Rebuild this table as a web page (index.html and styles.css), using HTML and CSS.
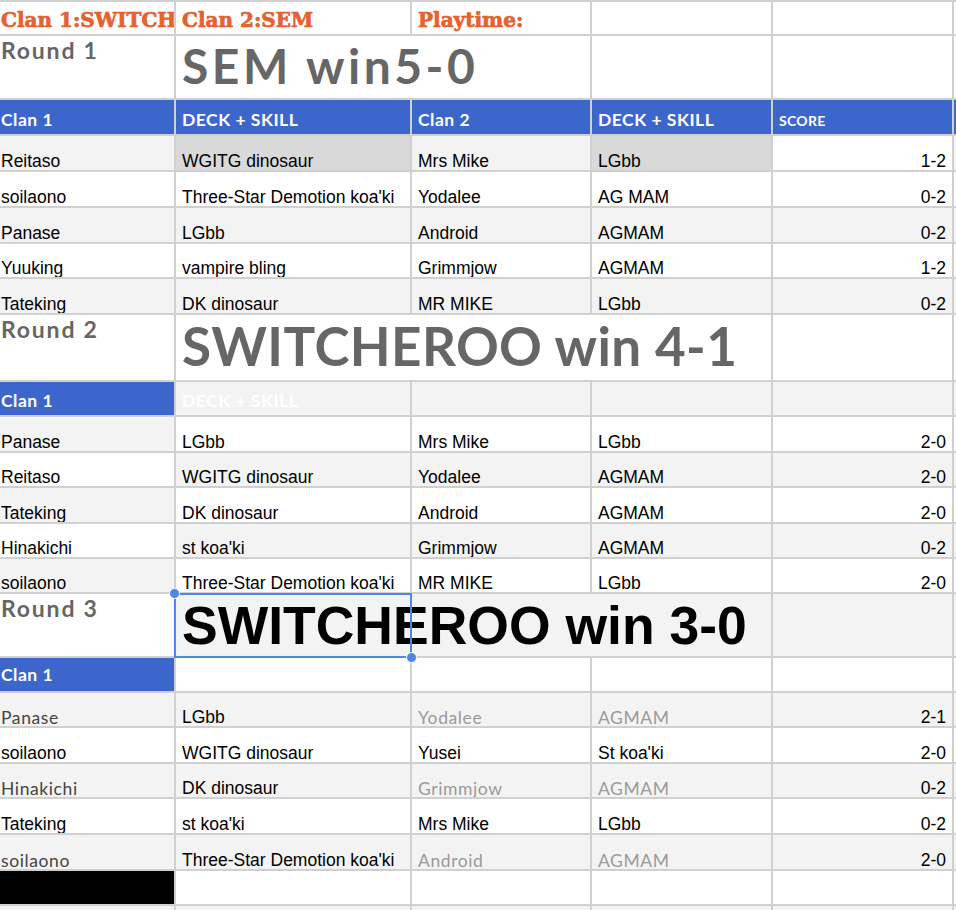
FILE: index.html
```html
<!DOCTYPE html>
<html lang="en">
<head>
<meta charset="utf-8">
<title>Clan match</title>
<link rel="stylesheet" href="styles.css">
</head>
<body>
<div class="sheet">
  <!-- title row -->
  <div class="c k1 t">Clan 1:SWITCH</div>
  <div class="c t">Clan 2:SEM</div>
  <div class="c t">Playtime:</div>
  <div class="c"></div><div class="c"></div><div class="c"></div>

  <!-- Round 1 -->
  <div class="c k1 rnd">Round 1</div>
  <div class="c big s2">SEM win5-0</div>
  <div class="c"></div><div class="c"></div><div class="c"></div>

  <div class="c k1 b hd">Clan 1</div>
  <div class="c b hd">DECK + SKILL</div>
  <div class="c b hd">Clan 2</div>
  <div class="c b hd">DECK + SKILL</div>
  <div class="c b hd sm">SCORE</div>
  <div class="c b"></div>

  <div class="c k1 g">Reitaso</div><div class="c d">WGITG dinosaur</div><div class="c g">Mrs Mike</div><div class="c d">LGbb</div><div class="c n">1-2</div><div class="c g"></div>
  <div class="c k1">soilaono</div><div class="c">Three-Star Demotion koa'ki</div><div class="c">Yodalee</div><div class="c">AG MAM</div><div class="c n">0-2</div><div class="c"></div>
  <div class="c k1 g">Panase</div><div class="c g">LGbb</div><div class="c g">Android</div><div class="c g">AGMAM</div><div class="c g n">0-2</div><div class="c g"></div>
  <div class="c k1">Yuuking</div><div class="c">vampire bling</div><div class="c">Grimmjow</div><div class="c">AGMAM</div><div class="c n">1-2</div><div class="c"></div>
  <div class="c k1 g">Tateking</div><div class="c g">DK dinosaur</div><div class="c g">MR MIKE</div><div class="c g">LGbb</div><div class="c g n">0-2</div><div class="c g"></div>

  <!-- Round 2 -->
  <div class="c k1 rnd">Round 2</div>
  <div class="c big s3">SWITCHEROO win 4-1</div>
  <div class="c"></div><div class="c"></div>

  <div class="c k1 b hd">Clan 1</div>
  <div class="c g hd">DECK + SKILL</div>
  <div class="c g"></div><div class="c g"></div><div class="c g"></div><div class="c g"></div>

  <div class="c k1 g">Panase</div><div class="c">LGbb</div><div class="c">Mrs Mike</div><div class="c">LGbb</div><div class="c n">2-0</div><div class="c"></div>
  <div class="c k1">Reitaso</div><div class="c g">WGITG dinosaur</div><div class="c g">Yodalee</div><div class="c g">AGMAM</div><div class="c g n">2-0</div><div class="c g"></div>
  <div class="c k1 g">Tateking</div><div class="c">DK dinosaur</div><div class="c">Android</div><div class="c">AGMAM</div><div class="c n">2-0</div><div class="c"></div>
  <div class="c k1">Hinakichi</div><div class="c g">st koa'ki</div><div class="c g">Grimmjow</div><div class="c g">AGMAM</div><div class="c g n">0-2</div><div class="c g"></div>
  <div class="c k1 g">soilaono</div><div class="c">Three-Star Demotion koa'ki</div><div class="c">MR MIKE</div><div class="c">LGbb</div><div class="c n">2-0</div><div class="c"></div>

  <!-- Round 3 -->
  <div class="c k1 rnd">Round 3</div>
  <div class="c g big3">SWITCHEROO win 3-0<div class="sel"></div></div>
  <div class="c g"></div><div class="c g"></div>

  <div class="c k1 b hd hd3">Clan 1</div>
  <div class="c"></div><div class="c"></div><div class="c"></div><div class="c"></div><div class="c"></div>

  <div class="c k1 g rl">Panase</div><div class="c g">LGbb</div><div class="c g rl lt">Yodalee</div><div class="c g rl lt">AGMAM</div><div class="c g n">2-1</div><div class="c g"></div>
  <div class="c k1">soilaono</div><div class="c">WGITG dinosaur</div><div class="c">Yusei</div><div class="c">St koa'ki</div><div class="c n">2-0</div><div class="c"></div>
  <div class="c k1 g rl">Hinakichi</div><div class="c g">DK dinosaur</div><div class="c g rl lt">Grimmjow</div><div class="c g rl lt">AGMAM</div><div class="c g n">0-2</div><div class="c g"></div>
  <div class="c k1">Tateking</div><div class="c">st koa'ki</div><div class="c">Mrs Mike</div><div class="c">LGbb</div><div class="c n">0-2</div><div class="c"></div>
  <div class="c k1 g rl">soilaono</div><div class="c g">Three-Star Demotion koa'ki</div><div class="c g rl lt">Android</div><div class="c g rl lt">AGMAM</div><div class="c g n">2-0</div><div class="c g"></div>

  <div class="c k1 blk"></div><div class="c"></div><div class="c"></div><div class="c"></div><div class="c"></div><div class="c"></div>
  <div class="c k1 g"></div><div class="c g"></div><div class="c g"></div><div class="c g"></div><div class="c g"></div><div class="c g"></div>
</div>
</body>
</html>
```

FILE: styles.css
```css
html, body {
  margin: 0;
  padding: 0;
  background: #fff;
  overflow: hidden;
}

.sheet {
  display: grid;
  grid-template-columns: 174px 234px 178px 179px 179px 1fr;
  grid-template-rows:
    32px 62px 34px 34px 34px 34px 33px 34px
    65px 33px 34px 33px 34px 33px 33px
    62px 33px 33px 34px 33px 34px 34px 33px 20px;
  gap: 2px;
  padding-top: 2px;
  background: #d0d0d0;
}

.c {
  background: #fff;
  display: flex;
  align-items: flex-end;
  min-width: 0;
  padding: 0 6px 0;
  overflow: hidden;
  white-space: nowrap;
  font: 17.5px/1 "Liberation Sans", Arial, sans-serif;
  color: #000;
}

.k1 { padding-left: 1px; }
.g { background: #f3f3f3; }
.d { background: #d9d9d9; }
.b { background: #3d66cc; }
.blk { background: #000; }
.n { justify-content: flex-end; }

.t {
  font: bold 20px/1 "DejaVu Serif", "Liberation Serif", serif;
  color: #e5622f;
  padding-bottom: 4px;
  -webkit-text-stroke: 0.7px #e5622f;
}

.rnd {
  align-items: flex-start;
  font: 700 23px/1.2 Lato, "Open Sans", sans-serif;
  color: #666;
  letter-spacing: 1.8px;
  padding-top: 1px;
}

.big {
  font: 700 48px/1 Lato, "Open Sans", sans-serif;
  color: #666;
  padding-bottom: 8px;
  letter-spacing: 3.5px;
}
.s2 { grid-column: span 2; }
.s3 { grid-column: span 3; font-size: 53px; padding-bottom: 8px; letter-spacing: 0.4px; }

.big3 {
  grid-column: span 3;
  position: relative;
  overflow: visible;
  font: 700 53.5px/1 "Liberation Sans", Arial, sans-serif;
  color: #000;
  padding-bottom: 4px;
}

.sel {
  position: absolute;
  left: -2px;
  top: -1px;
  width: 238px;
  height: 65px;
  border: 2px solid #4d88e6;
  box-sizing: border-box;
  z-index: 2;
}
.sel::before,
.sel::after {
  content: "";
  position: absolute;
  width: 9px;
  height: 9px;
  border-radius: 50%;
  background: #4d88e6;
  border: 1.5px solid #fff;
}
.sel::before { left: -7px; top: -7px; }
.sel::after { right: -7px; bottom: -7px; }

.hd {
  color: #fff;
  font: 700 17.5px/1 Lato, "Open Sans", sans-serif;
  letter-spacing: 0.5px;
  padding-bottom: 6px;
}
.hd3 { padding-bottom: 8px; }
.sm { font-size: 14px; letter-spacing: 0.3px; }

.rl {
  font-family: Lato, "Open Sans", sans-serif;
  font-weight: 400;
  color: #444;
  letter-spacing: 0.6px;
}
.lt { color: #9a9a9a; }
```
